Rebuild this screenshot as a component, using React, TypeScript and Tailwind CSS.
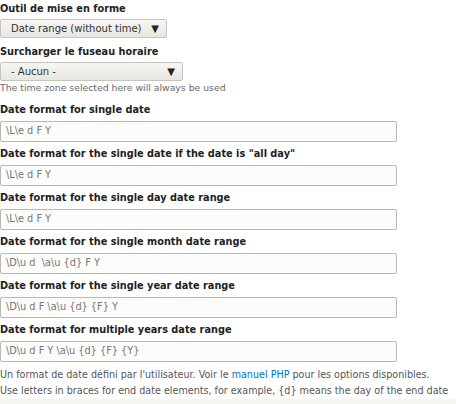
const fields = [
  { label: 'Date format for single date', value: '\\L\\e d F Y' },
  { label: 'Date format for the single date if the date is "all day"', value: '\\L\\e d F Y' },
  { label: 'Date format for the single day date range', value: '\\L\\e d F Y' },
  { label: 'Date format for the single month date range', value: '\\D\\u d  \\a\\u {d} F Y' },
  { label: 'Date format for the single year date range', value: '\\D\\u d F \\a\\u {d} {F} Y' },
  { label: 'Date format for multiple years date range', value: '\\D\\u d F Y \\a\\u {d} {F} {Y}' },
]

function Caret() {
  return <span className="text-[10px] leading-none text-[#222]">▼</span>
}

function Select({ text, width }: { text: string; width: string }) {
  return (
    <div
      className={`mt-[3px] flex h-[19px] ${width} items-center justify-between rounded-[2px] border border-[#c5c4bd] bg-gradient-to-b from-[#f7f6f2] to-[#e7e6e0] pl-[10px] pr-[7px] text-[10px] whitespace-nowrap text-[#333]`}
    >
      <span>{text}</span>
      <Caret />
    </div>
  )
}

export default function App() {
  return (
    <div className="flex h-[404px] w-[456px] flex-col overflow-hidden bg-white font-['DejaVu_Sans',sans-serif] text-[#333]">
      <div className="pt-[2px]">
        <div className="text-[9.75px] font-bold leading-[14px] text-[#222]">Outil de mise en forme</div>
        <Select text="Date range (without time)" width="w-[167px]" />

        <div className="mt-[7px] text-[9.75px] font-bold leading-[14px] text-[#222]">Surcharger le fuseau horaire</div>
        <Select text="- Aucun -" width="w-[183px]" />
        <div className="mt-[1px] text-[9.3px] leading-[12px] text-[#68696b]">The time zone selected here will always be used</div>

        <div className="mt-[9px] flex flex-col gap-[5px]">
          {fields.map((f) => (
            <div key={f.label}>
              <div className="text-[9.75px] font-bold leading-[13px] text-[#222]">{f.label}</div>
              <div className="mt-[5px] flex h-[21px] w-[397px] items-center rounded-[2px] border border-[#b8b8b8] bg-[#fcfcfa] pl-[5px] text-[9.75px] whitespace-pre text-[#777]">
                {f.value}
              </div>
            </div>
          ))}
        </div>

        <div className="mt-[5px] text-[9.6px] leading-[16px] whitespace-nowrap text-[#555]">
          <div>
            Un format de date défini par l'utilisateur. Voir le <span className="text-[#0074bd]">manuel PHP</span> pour les options disponibles.
          </div>
          <div>Use letters in braces for end date elements, for example, {'{d}'} means the day of the end date</div>
        </div>
      </div>
      <div className="flex-1 bg-[#f5f5f2]" />
    </div>
  )
}
